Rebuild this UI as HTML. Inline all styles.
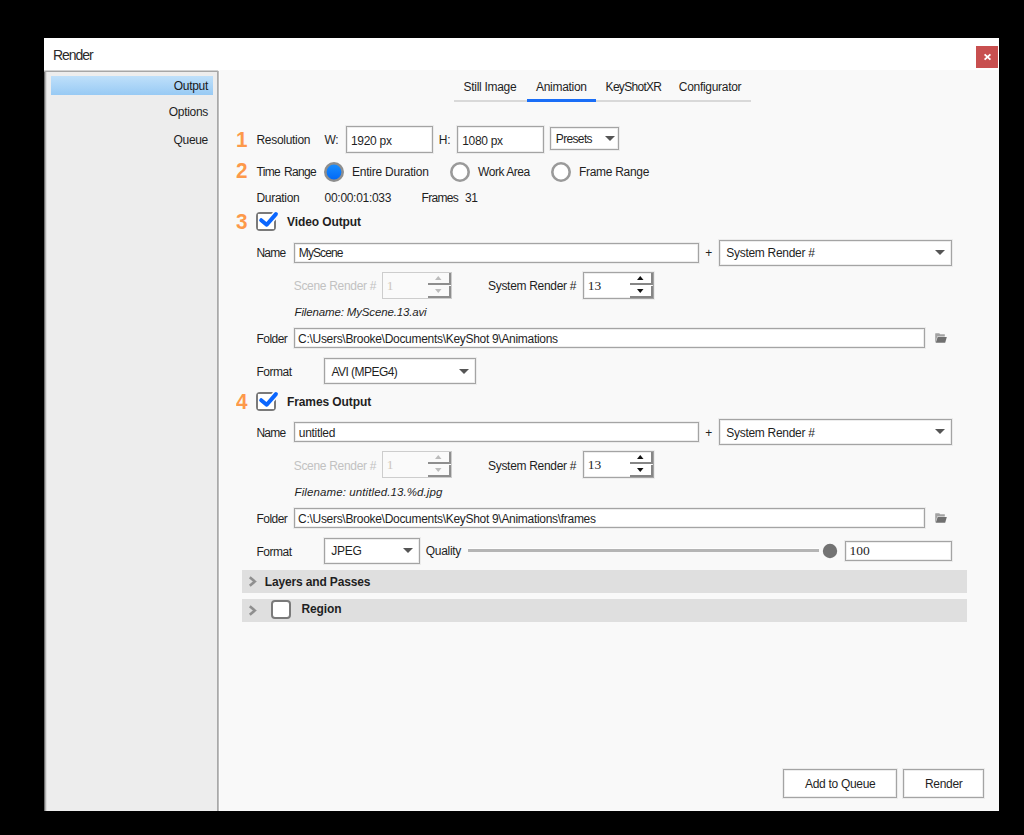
<!DOCTYPE html>
<html><head><meta charset="utf-8"><title>Render</title>
<style>
html,body{margin:0;padding:0;}
body{width:1024px;height:835px;background:#000;position:relative;overflow:hidden;font-family:"Liberation Sans", sans-serif;}
body>div,body>svg{position:absolute;}
</style></head><body>
<div style="left:44px;top:38px;width:955px;height:32px;background:#fff;"></div>
<div style="left:53px;top:48px;font-size:14px;line-height:14px;color:#2b2b2b;font-weight:normal;letter-spacing:-1.05px;white-space:nowrap;">Render</div>
<div style="left:976px;top:46px;width:22px;height:22px;background:#c84f4f;"></div>
<svg style="left:983px;top:53px" width="9" height="8" viewBox="0 0 9 8"><path d="M1.6 1.4 L7.4 6.6 M7.4 1.4 L1.6 6.6" stroke="#fff" stroke-width="1.9"/></svg>
<div style="left:218px;top:70px;width:781px;height:741px;background:#f9f9f9;"></div>
<div style="left:44px;top:70px;width:174px;height:741px;background:#ededed;"></div>
<div style="left:44px;top:70px;width:174px;height:1px;background:#d2d2d2;"></div>
<div style="left:44px;top:71px;width:174px;height:1px;background:#a6a6a6;"></div>
<div style="left:217px;top:71px;width:1px;height:740px;background:#a9a9a9;"></div>
<div style="left:218px;top:71px;width:1px;height:740px;background:#bdbdbd;"></div>
<div style="left:219px;top:70px;width:1px;height:741px;background:#fdfdfd;"></div>
<div style="left:44px;top:72px;width:1px;height:739px;background:#707070;"></div>
<div style="left:45px;top:72px;width:1px;height:739px;background:#b2b2b2;"></div>
<div style="left:46px;top:72px;width:1px;height:739px;background:#dcdcdc;"></div>
<div style="left:51px;top:76px;width:162px;height:19px;background:linear-gradient(#bfe0fa,#98caf4);"></div>
<div style="right:816px;top:80px;font-size:12px;line-height:12px;color:#1a1a1a;font-weight:normal;letter-spacing:-0.3px;white-space:nowrap;">Output</div>
<div style="right:816px;top:106px;font-size:12px;line-height:12px;color:#1f1f1f;font-weight:normal;letter-spacing:-0.3px;white-space:nowrap;">Options</div>
<div style="right:816px;top:134px;font-size:12px;line-height:12px;color:#1f1f1f;font-weight:normal;letter-spacing:-0.3px;white-space:nowrap;">Queue</div>
<div style="left:454px;top:100px;width:297px;height:2px;background:#d9d9d9;"></div>
<div style="left:527px;top:99px;width:69px;height:3px;background:#1a6ef7;"></div>
<div style="left:463.6px;top:81px;font-size:12px;line-height:12px;color:#1f1f1f;font-weight:normal;letter-spacing:-0.3px;white-space:nowrap;">Still Image</div>
<div style="left:536px;top:81px;font-size:12px;line-height:12px;color:#1f1f1f;font-weight:normal;letter-spacing:-0.3px;white-space:nowrap;">Animation</div>
<div style="left:605.6px;top:81px;font-size:12px;line-height:12px;color:#1f1f1f;font-weight:normal;letter-spacing:-0.7px;white-space:nowrap;">KeyShotXR</div>
<div style="left:678.8px;top:81px;font-size:12px;line-height:12px;color:#1f1f1f;font-weight:normal;letter-spacing:-0.3px;white-space:nowrap;">Configurator</div>
<div style="left:236px;top:129px;font-size:22.5px;line-height:22.5px;color:#fd994a;font-weight:bold;transform:scaleX(0.92);transform-origin:0 0;">1</div>
<div style="left:256.5px;top:134px;font-size:12px;line-height:12px;color:#1f1f1f;font-weight:normal;letter-spacing:-0.3px;white-space:nowrap;">Resolution</div>
<div style="left:324.4px;top:134px;font-size:12px;line-height:12px;color:#1f1f1f;font-weight:normal;letter-spacing:-0.3px;white-space:nowrap;">W:</div>
<div style="left:346px;top:126px;width:87px;height:27px;background:#fff;border:1px solid #a4a4a4;box-sizing:border-box;box-shadow:0 0 0 1px rgba(0,0,0,0.05), inset 0 0 0 1px rgba(0,0,0,0.07);"></div>
<div style="left:351px;top:135px;font-size:12px;line-height:12px;color:#1f1f1f;font-weight:normal;letter-spacing:-0.3px;white-space:nowrap;">1920 px</div>
<div style="left:438.8px;top:134px;font-size:12px;line-height:12px;color:#1f1f1f;font-weight:normal;letter-spacing:-0.3px;white-space:nowrap;">H:</div>
<div style="left:457px;top:126px;width:87px;height:27px;background:#fff;border:1px solid #a4a4a4;box-sizing:border-box;box-shadow:0 0 0 1px rgba(0,0,0,0.05), inset 0 0 0 1px rgba(0,0,0,0.07);"></div>
<div style="left:462.2px;top:135px;font-size:12px;line-height:12px;color:#1f1f1f;font-weight:normal;letter-spacing:-0.3px;white-space:nowrap;">1080 px</div>
<div style="left:550px;top:127px;width:69px;height:23px;background:#fff;border:1px solid #a4a4a4;box-sizing:border-box;box-shadow:0 0 0 1px rgba(0,0,0,0.05), inset 0 0 0 1px rgba(0,0,0,0.07);"></div>
<div style="left:555.8px;top:133px;font-size:12px;line-height:12px;color:#1f1f1f;font-weight:normal;letter-spacing:-0.65px;white-space:nowrap;">Presets</div>
<svg style="left:605px;top:136px" width="10" height="5" viewBox="0 0 10 5" preserveAspectRatio="none"><path d="M0 0H10L5 5Z" fill="#555"/></svg>
<div style="left:236px;top:160px;font-size:22.5px;line-height:22.5px;color:#fd994a;font-weight:bold;transform:scaleX(0.92);transform-origin:0 0;">2</div>
<div style="left:256.5px;top:166px;font-size:12px;line-height:12px;color:#1f1f1f;font-weight:normal;letter-spacing:-0.7px;white-space:nowrap;word-spacing:1.5px;">Time Range</div>
<svg style="left:323.4px;top:160.6px" width="22" height="22" viewBox="0 0 22 22"><defs><linearGradient id="rg" x1="0" y1="0" x2="0" y2="1"><stop offset="0" stop-color="#1a90ff"/><stop offset="1" stop-color="#0066f5"/></linearGradient></defs><circle cx="11" cy="11" r="8.7" fill="url(#rg)" stroke="#8e8e8e" stroke-width="2.6"/></svg>
<div style="left:351.9px;top:166px;font-size:12px;line-height:12px;color:#1f1f1f;font-weight:normal;letter-spacing:-0.22px;white-space:nowrap;">Entire Duration</div>
<svg style="left:449.4px;top:160.6px" width="22" height="22" viewBox="0 0 22 22"><circle cx="11" cy="11" r="8.7" fill="#fff" stroke="#9a9a9a" stroke-width="2.6"/></svg>
<div style="left:478px;top:166px;font-size:12px;line-height:12px;color:#1f1f1f;font-weight:normal;letter-spacing:-0.45px;white-space:nowrap;">Work Area</div>
<svg style="left:550.4px;top:160.6px" width="22" height="22" viewBox="0 0 22 22"><circle cx="11" cy="11" r="8.7" fill="#fff" stroke="#9a9a9a" stroke-width="2.6"/></svg>
<div style="left:579px;top:166px;font-size:12px;line-height:12px;color:#1f1f1f;font-weight:normal;letter-spacing:-0.3px;white-space:nowrap;">Frame Range</div>
<div style="left:256.5px;top:192px;font-size:12px;line-height:12px;color:#1f1f1f;font-weight:normal;letter-spacing:-0.3px;white-space:nowrap;">Duration</div>
<div style="left:324.6px;top:192px;font-size:12px;line-height:12px;color:#1f1f1f;font-weight:normal;letter-spacing:-0.3px;white-space:nowrap;">00:00:01:033</div>
<div style="left:421.5px;top:192px;font-size:12px;line-height:12px;color:#1f1f1f;font-weight:normal;letter-spacing:-0.7px;white-space:nowrap;">Frames</div>
<div style="left:465px;top:192px;font-size:12px;line-height:12px;color:#1f1f1f;font-weight:normal;letter-spacing:-0.3px;white-space:nowrap;">31</div>
<div style="left:236px;top:211px;font-size:22.5px;line-height:22.5px;color:#fd994a;font-weight:bold;transform:scaleX(0.92);transform-origin:0 0;">3</div>
<svg style="left:254px;top:210px" width="26" height="24" viewBox="-2 -2 26 24"><rect x="1" y="1" width="18" height="17" rx="3" fill="#fff" stroke="#7a7a7a" stroke-width="2"/><path d="M14 8.9 L19.9 2.1" fill="none" stroke="#f9f9f9" stroke-width="7" stroke-linecap="round"/><rect x="2" y="2" width="16" height="15" fill="#fff"/><path d="M5.2 8.2 L10.7 12.7 L19.9 2.1" fill="none" stroke="#0a66ff" stroke-width="4" stroke-linecap="round" stroke-linejoin="round"/></svg>
<div style="left:287px;top:216px;font-size:12px;line-height:12px;color:#1f1f1f;font-weight:bold;letter-spacing:-0.1px;white-space:nowrap;">Video Output</div>
<div style="left:256.5px;top:247px;font-size:12px;line-height:12px;color:#1f1f1f;font-weight:normal;letter-spacing:-0.8px;white-space:nowrap;">Name</div>
<div style="left:294px;top:243px;width:405px;height:20px;background:#fff;border:1px solid #a4a4a4;box-sizing:border-box;box-shadow:0 0 0 1px rgba(0,0,0,0.05), inset 0 0 0 1px rgba(0,0,0,0.07);"></div>
<div style="left:298.8px;top:247px;font-size:12px;line-height:12px;color:#1f1f1f;font-weight:normal;letter-spacing:-0.9px;white-space:nowrap;">MyScene</div>
<div style="left:705.3px;top:247px;font-size:12px;line-height:12px;color:#1f1f1f;font-weight:normal;letter-spacing:-0.3px;white-space:nowrap;">+</div>
<div style="left:719px;top:240px;width:233px;height:26px;background:#fff;border:1px solid #a4a4a4;box-sizing:border-box;box-shadow:0 0 0 1px rgba(0,0,0,0.05), inset 0 0 0 1px rgba(0,0,0,0.07);"></div>
<div style="left:726.3px;top:247px;font-size:12px;line-height:12px;color:#1f1f1f;font-weight:normal;letter-spacing:-0.3px;white-space:nowrap;">System Render #</div>
<svg style="left:935px;top:250px" width="10" height="5" viewBox="0 0 10 5" preserveAspectRatio="none"><path d="M0 0H10L5 5Z" fill="#555"/></svg>
<div style="left:293.7px;top:280px;font-size:12px;line-height:12px;color:#c2c2c2;font-weight:normal;letter-spacing:-0.3px;white-space:nowrap;">Scene Render #</div>
<div style="left:382px;top:272px;width:70px;height:27px;background:#fafafa;border:1px solid #cdcdcd;box-sizing:border-box;"></div>
<div style="left:386.7px;top:279px;font-family:'Liberation Serif',serif;font-size:13.5px;line-height:13.5px;color:#cfc6bd;">1</div>
<div style="left:428px;top:283px;width:23px;height:2px;background:#8e8e8e;"></div>
<div style="left:449px;top:273px;width:2px;height:11px;background:#8e8e8e;"></div>
<div style="left:449px;top:286px;width:2px;height:12px;background:#8e8e8e;"></div>
<div style="left:428px;top:296px;width:23px;height:2px;background:#8e8e8e;"></div>
<svg style="left:435px;top:276px" width="6.5" height="4" viewBox="0 0 7 4" preserveAspectRatio="none"><path d="M0 4H7L3.5 0Z" fill="#bcbcbc"/></svg>
<svg style="left:435px;top:289px" width="6.5" height="4" viewBox="0 0 7 4" preserveAspectRatio="none"><path d="M0 0H7L3.5 4Z" fill="#bcbcbc"/></svg>
<div style="left:488px;top:280px;font-size:12px;line-height:12px;color:#1f1f1f;font-weight:normal;letter-spacing:-0.3px;white-space:nowrap;">System Render #</div>
<div style="left:583px;top:272px;width:71px;height:27px;background:#fff;border:1px solid #a4a4a4;box-sizing:border-box;box-shadow:0 0 0 1px rgba(0,0,0,0.05), inset 0 0 0 1px rgba(0,0,0,0.07);"></div>
<div style="left:587.7px;top:279px;font-family:'Liberation Serif',serif;font-size:13.5px;line-height:13.5px;color:#1f1f1f;">13</div>
<div style="left:630px;top:283px;width:23px;height:2px;background:#868686;"></div>
<div style="left:651px;top:273px;width:2px;height:11px;background:#868686;"></div>
<div style="left:651px;top:286px;width:2px;height:12px;background:#868686;"></div>
<div style="left:630px;top:296px;width:23px;height:2px;background:#868686;"></div>
<svg style="left:637px;top:276px" width="6.5" height="4" viewBox="0 0 7 4" preserveAspectRatio="none"><path d="M0 4H7L3.5 0Z" fill="#111"/></svg>
<svg style="left:637px;top:289px" width="6.5" height="4" viewBox="0 0 7 4" preserveAspectRatio="none"><path d="M0 0H7L3.5 4Z" fill="#111"/></svg>
<div style="left:294.6px;top:307px;font-size:11.5px;line-height:11.5px;color:#1f1f1f;font-weight:normal;letter-spacing:-0.15px;white-space:nowrap;font-style:italic;">Filename: MyScene.13.avi</div>
<div style="left:256.5px;top:333px;font-size:12px;line-height:12px;color:#1f1f1f;font-weight:normal;letter-spacing:-0.55px;white-space:nowrap;">Folder</div>
<div style="left:294px;top:328px;width:631px;height:20px;background:#fff;border:1px solid #a4a4a4;box-sizing:border-box;box-shadow:0 0 0 1px rgba(0,0,0,0.05), inset 0 0 0 1px rgba(0,0,0,0.07);"></div>
<div style="left:298.1px;top:333px;font-size:12px;line-height:12px;color:#1f1f1f;font-weight:normal;letter-spacing:-0.3px;white-space:nowrap;">C:\Users\Brooke\Documents\KeyShot 9\Animations</div>
<svg style="left:935px;top:333px" width="12" height="10" viewBox="0 0 12 10"><path d="M0.2 9.6V0.6Q0.2 0.2 0.8 0.2H4.2L5.2 1.2H9.8V3.6H2.2L0.6 9.6Z" fill="#a2a2a2"/><path d="M2.6 3.9H11.8L10.2 9.7H0.8Z" fill="#707070"/></svg>
<div style="left:256.5px;top:366px;font-size:12px;line-height:12px;color:#1f1f1f;font-weight:normal;letter-spacing:-0.5px;white-space:nowrap;">Format</div>
<div style="left:324px;top:358px;width:152px;height:26px;background:#fff;border:1px solid #a4a4a4;box-sizing:border-box;box-shadow:0 0 0 1px rgba(0,0,0,0.05), inset 0 0 0 1px rgba(0,0,0,0.07);"></div>
<div style="left:331.5px;top:366px;font-size:12px;line-height:12px;color:#1f1f1f;font-weight:normal;letter-spacing:-0.55px;white-space:nowrap;">AVI (MPEG4)</div>
<svg style="left:459px;top:368.5px" width="10" height="5" viewBox="0 0 10 5" preserveAspectRatio="none"><path d="M0 0H10L5 5Z" fill="#555"/></svg>
<div style="left:236px;top:391px;font-size:22.5px;line-height:22.5px;color:#fd994a;font-weight:bold;transform:scaleX(0.92);transform-origin:0 0;">4</div>
<svg style="left:254px;top:390px" width="26" height="24" viewBox="-2 -2 26 24"><rect x="1" y="1" width="18" height="17" rx="3" fill="#fff" stroke="#7a7a7a" stroke-width="2"/><path d="M14 8.9 L19.9 2.1" fill="none" stroke="#f9f9f9" stroke-width="7" stroke-linecap="round"/><rect x="2" y="2" width="16" height="15" fill="#fff"/><path d="M5.2 8.2 L10.7 12.7 L19.9 2.1" fill="none" stroke="#0a66ff" stroke-width="4" stroke-linecap="round" stroke-linejoin="round"/></svg>
<div style="left:287px;top:396px;font-size:12px;line-height:12px;color:#1f1f1f;font-weight:bold;letter-spacing:-0.1px;white-space:nowrap;">Frames Output</div>
<div style="left:256.5px;top:427px;font-size:12px;line-height:12px;color:#1f1f1f;font-weight:normal;letter-spacing:-0.8px;white-space:nowrap;">Name</div>
<div style="left:294px;top:422px;width:405px;height:20px;background:#fff;border:1px solid #a4a4a4;box-sizing:border-box;box-shadow:0 0 0 1px rgba(0,0,0,0.05), inset 0 0 0 1px rgba(0,0,0,0.07);"></div>
<div style="left:298.8px;top:427px;font-size:12px;line-height:12px;color:#1f1f1f;font-weight:normal;letter-spacing:-0.3px;white-space:nowrap;">untitled</div>
<div style="left:705.3px;top:427px;font-size:12px;line-height:12px;color:#1f1f1f;font-weight:normal;letter-spacing:-0.3px;white-space:nowrap;">+</div>
<div style="left:719px;top:419px;width:233px;height:26px;background:#fff;border:1px solid #a4a4a4;box-sizing:border-box;box-shadow:0 0 0 1px rgba(0,0,0,0.05), inset 0 0 0 1px rgba(0,0,0,0.07);"></div>
<div style="left:726.3px;top:427px;font-size:12px;line-height:12px;color:#1f1f1f;font-weight:normal;letter-spacing:-0.3px;white-space:nowrap;">System Render #</div>
<svg style="left:935px;top:429px" width="10" height="5" viewBox="0 0 10 5" preserveAspectRatio="none"><path d="M0 0H10L5 5Z" fill="#555"/></svg>
<div style="left:293.7px;top:460px;font-size:12px;line-height:12px;color:#c2c2c2;font-weight:normal;letter-spacing:-0.3px;white-space:nowrap;">Scene Render #</div>
<div style="left:382px;top:451px;width:70px;height:27px;background:#fafafa;border:1px solid #cdcdcd;box-sizing:border-box;"></div>
<div style="left:386.7px;top:458px;font-family:'Liberation Serif',serif;font-size:13.5px;line-height:13.5px;color:#cfc6bd;">1</div>
<div style="left:428px;top:462px;width:23px;height:2px;background:#8e8e8e;"></div>
<div style="left:449px;top:452px;width:2px;height:11px;background:#8e8e8e;"></div>
<div style="left:449px;top:465px;width:2px;height:12px;background:#8e8e8e;"></div>
<div style="left:428px;top:475px;width:23px;height:2px;background:#8e8e8e;"></div>
<svg style="left:435px;top:455px" width="6.5" height="4" viewBox="0 0 7 4" preserveAspectRatio="none"><path d="M0 4H7L3.5 0Z" fill="#bcbcbc"/></svg>
<svg style="left:435px;top:468px" width="6.5" height="4" viewBox="0 0 7 4" preserveAspectRatio="none"><path d="M0 0H7L3.5 4Z" fill="#bcbcbc"/></svg>
<div style="left:488px;top:460px;font-size:12px;line-height:12px;color:#1f1f1f;font-weight:normal;letter-spacing:-0.3px;white-space:nowrap;">System Render #</div>
<div style="left:583px;top:451px;width:71px;height:27px;background:#fff;border:1px solid #a4a4a4;box-sizing:border-box;box-shadow:0 0 0 1px rgba(0,0,0,0.05), inset 0 0 0 1px rgba(0,0,0,0.07);"></div>
<div style="left:587.7px;top:458px;font-family:'Liberation Serif',serif;font-size:13.5px;line-height:13.5px;color:#1f1f1f;">13</div>
<div style="left:630px;top:462px;width:23px;height:2px;background:#868686;"></div>
<div style="left:651px;top:452px;width:2px;height:11px;background:#868686;"></div>
<div style="left:651px;top:465px;width:2px;height:12px;background:#868686;"></div>
<div style="left:630px;top:475px;width:23px;height:2px;background:#868686;"></div>
<svg style="left:637px;top:455px" width="6.5" height="4" viewBox="0 0 7 4" preserveAspectRatio="none"><path d="M0 4H7L3.5 0Z" fill="#111"/></svg>
<svg style="left:637px;top:468px" width="6.5" height="4" viewBox="0 0 7 4" preserveAspectRatio="none"><path d="M0 0H7L3.5 4Z" fill="#111"/></svg>
<div style="left:294.6px;top:487px;font-size:11.5px;line-height:11.5px;color:#1f1f1f;font-weight:normal;letter-spacing:0.1px;white-space:nowrap;font-style:italic;">Filename: untitled.13.%d.jpg</div>
<div style="left:256.5px;top:513px;font-size:12px;line-height:12px;color:#1f1f1f;font-weight:normal;letter-spacing:-0.55px;white-space:nowrap;">Folder</div>
<div style="left:294px;top:508px;width:631px;height:20px;background:#fff;border:1px solid #a4a4a4;box-sizing:border-box;box-shadow:0 0 0 1px rgba(0,0,0,0.05), inset 0 0 0 1px rgba(0,0,0,0.07);"></div>
<div style="left:298.1px;top:513px;font-size:12px;line-height:12px;color:#1f1f1f;font-weight:normal;letter-spacing:-0.3px;white-space:nowrap;">C:\Users\Brooke\Documents\KeyShot 9\Animations\frames</div>
<svg style="left:935px;top:513px" width="12" height="10" viewBox="0 0 12 10"><path d="M0.2 9.6V0.6Q0.2 0.2 0.8 0.2H4.2L5.2 1.2H9.8V3.6H2.2L0.6 9.6Z" fill="#a2a2a2"/><path d="M2.6 3.9H11.8L10.2 9.7H0.8Z" fill="#707070"/></svg>
<div style="left:256.5px;top:546px;font-size:12px;line-height:12px;color:#1f1f1f;font-weight:normal;letter-spacing:-0.5px;white-space:nowrap;">Format</div>
<div style="left:324px;top:538px;width:96px;height:26px;background:#fff;border:1px solid #a4a4a4;box-sizing:border-box;box-shadow:0 0 0 1px rgba(0,0,0,0.05), inset 0 0 0 1px rgba(0,0,0,0.07);"></div>
<div style="left:331.3px;top:545px;font-size:12px;line-height:12px;color:#1f1f1f;font-weight:normal;letter-spacing:-0.3px;white-space:nowrap;">JPEG</div>
<svg style="left:402.5px;top:547.8px" width="10" height="5" viewBox="0 0 10 5" preserveAspectRatio="none"><path d="M0 0H10L5 5Z" fill="#555"/></svg>
<div style="left:425.8px;top:545px;font-size:12px;line-height:12px;color:#1f1f1f;font-weight:normal;letter-spacing:-0.3px;white-space:nowrap;">Quality</div>
<div style="left:468px;top:549px;width:351px;height:3px;background:#b5b5b5;"></div>
<div style="left:468px;top:548px;width:351px;height:1px;background:#fefefe;"></div>
<svg style="left:821.5px;top:542.8px" width="16" height="16" viewBox="0 0 16 16"><circle cx="8" cy="8" r="7.2" fill="#737373"/></svg>
<div style="left:845px;top:541px;width:107px;height:20px;background:#fff;border:1px solid #a4a4a4;box-sizing:border-box;box-shadow:0 0 0 1px rgba(0,0,0,0.05), inset 0 0 0 1px rgba(0,0,0,0.07);"></div>
<div style="left:849.5px;top:544px;font-family:'Liberation Serif',serif;font-size:13.5px;line-height:13.5px;color:#1f1f1f;">100</div>
<div style="left:241.6px;top:570px;width:725.4px;height:22.6px;background:#dfdfdf;"></div>
<svg style="left:248.2px;top:575.8px" width="9" height="11" viewBox="0 0 9 11"><path d="M1.8 1.3L6.8 5.5L1.8 9.7" fill="none" stroke="#8f8f8f" stroke-width="2.6"/></svg>
<div style="left:264.8px;top:576px;font-size:12px;line-height:12px;color:#1f1f1f;font-weight:bold;letter-spacing:-0.15px;white-space:nowrap;">Layers and Passes</div>
<div style="left:241.6px;top:598.6px;width:725.4px;height:23.0px;background:#dfdfdf;"></div>
<svg style="left:248.2px;top:604.6px" width="9" height="11" viewBox="0 0 9 11"><path d="M1.8 1.3L6.8 5.5L1.8 9.7" fill="none" stroke="#8f8f8f" stroke-width="2.6"/></svg>
<svg style="left:269px;top:598px" width="26" height="24" viewBox="-2 -2 26 24"><rect x="1" y="1" width="18" height="17" rx="3" fill="#fff" stroke="#7a7a7a" stroke-width="2"/></svg>
<div style="left:301.4px;top:603px;font-size:12px;line-height:12px;color:#1f1f1f;font-weight:bold;letter-spacing:-0.1px;white-space:nowrap;">Region</div>
<div style="left:783px;top:769px;width:114px;height:29px;background:#fff;border:1px solid #a4a4a4;box-sizing:border-box;box-shadow:0 0 0 1px rgba(0,0,0,0.05), inset 0 0 0 1px rgba(0,0,0,0.07);"></div>
<div style="left:805px;top:778px;font-size:12px;line-height:12px;color:#1f1f1f;font-weight:normal;letter-spacing:-0.3px;white-space:nowrap;">Add to Queue</div>
<div style="left:903px;top:769px;width:81px;height:29px;background:#fff;border:1px solid #a4a4a4;box-sizing:border-box;box-shadow:0 0 0 1px rgba(0,0,0,0.05), inset 0 0 0 1px rgba(0,0,0,0.07);"></div>
<div style="left:925px;top:778px;font-size:12px;line-height:12px;color:#1f1f1f;font-weight:normal;letter-spacing:-0.3px;white-space:nowrap;">Render</div>
</body></html>
